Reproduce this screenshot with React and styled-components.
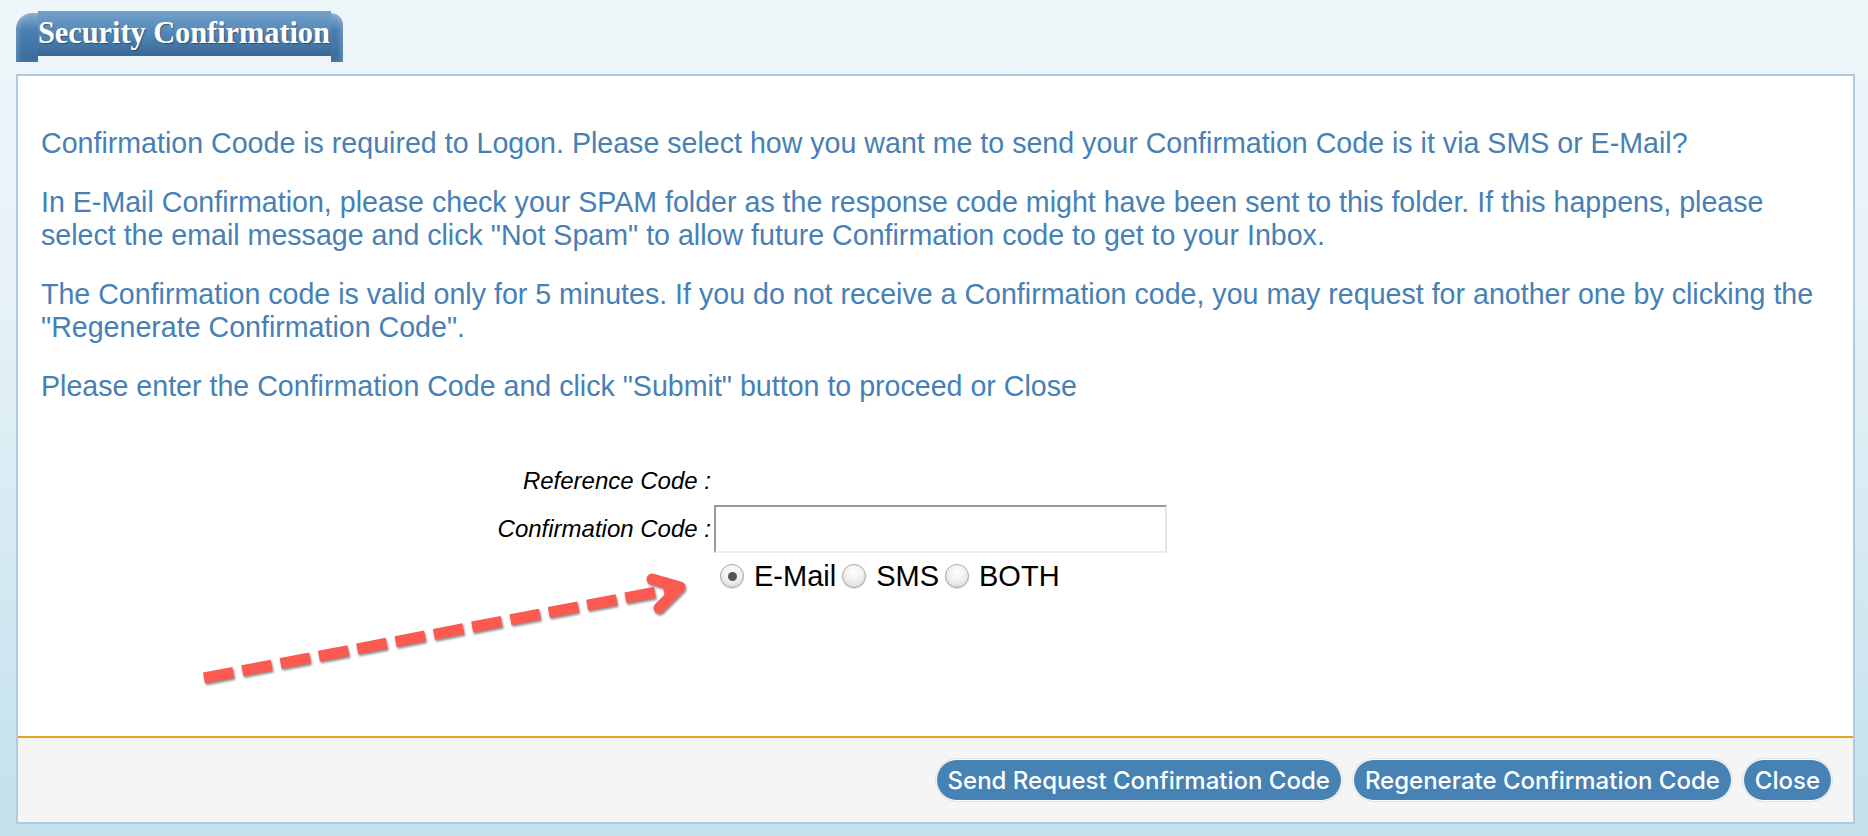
import React from "react";
import styled, { createGlobalStyle } from "styled-components";

const GlobalStyle = createGlobalStyle`
  html, body {
    margin: 0;
    padding: 0;
  }
  body {
    min-height: 836px;
    background: linear-gradient(to bottom, #eff6fa 0%, #e6f2f7 35%, #c2e1ec 100%);
    font-family: "Liberation Sans", Arial, sans-serif;
  }
`;

const Page = styled.div`
  padding: 11px 13px 12px 16px;
`;

const Tab = styled.div`
  display: inline-flex;
  align-items: flex-start;
  height: 51px;
  margin-bottom: 12px;
  vertical-align: top;
`;

const TabRow = styled.div`
  display: flex;
`;

const Ear = styled.div`
  flex-shrink: 0;
  align-self: stretch;
  width: ${(p) => (p.$side === "left" ? "22px" : "12px")};
  margin-top: 2px;
  background: linear-gradient(to bottom, #86abd0 0%, #4a7fb0 35%, #3a6c9c 100%);
  border-radius: ${(p) => (p.$side === "left" ? "16px 0 0 0" : "0 12px 0 0")};
  box-shadow: ${(p) =>
    p.$side === "left"
      ? "inset 3px 0 4px rgba(255,255,255,0.18)"
      : "inset -3px 0 4px rgba(255,255,255,0.18)"};
`;

const TabBar = styled.div`
  flex-shrink: 0;
  height: 45px;
  display: flex;
  align-items: center;
  padding-right: 1px;
  background: linear-gradient(to bottom, #73a1c9 0%, #5187b8 50%, #386894 100%);
  color: #fff;
  font-family: "Liberation Serif", "Times New Roman", serif;
  font-weight: bold;
  font-size: 30.5px;
  letter-spacing: -0.1px;
  text-shadow: 1px 1px 1px rgba(0, 0, 0, 0.35);
  white-space: nowrap;
`;

const Panel = styled.div`
  border: 2px solid #b3c9df;
  background: #fff;
`;

const Body = styled.div`
  position: relative;
  height: 660px;
  box-sizing: border-box;
  padding: 51px 23px 0 23px;
`;

const Para = styled.p`
  margin: 0 0 26px 0;
  font-size: 28.6px;
  line-height: 33px;
  color: #4680b5;
  white-space: nowrap;
`;

const Form = styled.div`
  display: grid;
  grid-template-columns: 670px auto;
  column-gap: 3px;
  grid-template-rows: 40px 48px 42px;
  row-gap: 4px;
  margin-top: 58px;
`;

const Label = styled.div`
  align-self: center;
  text-align: right;
  font-style: italic;
  font-size: 24px;
  color: #000;
  white-space: nowrap;
`;

const CodeInput = styled.input`
  box-sizing: border-box;
  width: 453px;
  height: 48px;
  border-width: 2px;
  border-style: solid;
  border-color: #9a9a9a #e4e4e4 #ececec #9a9a9a;
  background: #fff;
  outline: none;
  font-size: 24px;
  padding: 0 6px;
`;

const RadioRow = styled.div`
  display: flex;
  align-items: center;
  margin-top: -4px;
`;

const Option = styled.label`
  display: inline-flex;
  align-items: center;
  gap: 10px;
  margin-left: 6px;
  font-size: 29px;
  color: #000;
`;

const Radio = styled.input.attrs({ type: "radio" })`
  appearance: none;
  -webkit-appearance: none;
  box-sizing: border-box;
  margin: 0;
  width: 24px;
  height: 24px;
  border-radius: 50%;
  border: 1px solid #a4a4a4;
  background: radial-gradient(circle at 50% 35%, #ffffff 0%, #f1f1f1 45%, #d2d2d2 100%);
  box-shadow: inset 0 1px 1px rgba(255,255,255,0.9), 0 1px 1px rgba(0,0,0,0.12);
  display: grid;
  place-items: center;
  &:checked::after {
    content: "";
    width: 9px;
    height: 9px;
    border-radius: 50%;
    background: #555;
  }
`;

const ArrowSvg = styled.svg`
  position: absolute;
  left: 170px;
  top: 490px;
  width: 530px;
  height: 130px;
  overflow: visible;
  filter: drop-shadow(1px 2px 1px rgba(0, 0, 0, 0.45));
`;

const Footer = styled.div`
  height: 84px;
  border-top: 2px solid #dca522;
  background: #f5f5f5;
  display: flex;
  justify-content: flex-end;
  align-items: center;
  gap: 11px;
  padding-right: 21px;
`;

const Button = styled.button`
  height: 42px;
  box-sizing: border-box;
  padding: 0 11px;
  border: 1px solid #fff;
  box-shadow: 0 0 0 1px #e2e2e2;
  border-radius: 21px;
  background: #4682b4;
  color: #fff;
  font-family: Inter, "Liberation Sans", sans-serif;
  font-weight: 500;
  font-size: 24px;
  cursor: pointer;
  white-space: nowrap;
`;

export default function App() {
  return (
    <>
      <GlobalStyle />
      <Page>
        <TabRow>
          <Tab>
            <Ear $side="left" />
            <TabBar>Security Confirmation</TabBar>
            <Ear $side="right" />
          </Tab>
        </TabRow>
        <Panel>
          <Body>
            <Para>
              Confirmation Coode is required to Logon. Please select how you want me to send your
              Confirmation Code is it via SMS or E-Mail?
            </Para>
            <Para>
              In E-Mail Confirmation, please check your SPAM folder as the response code might have
              been sent to this folder. If this happens, please
              <br />
              select the email message and click "Not Spam" to allow future Confirmation code to get
              to your Inbox.
            </Para>
            <Para>
              The Confirmation code is valid only for 5 minutes. If you do not receive a Confirmation
              code, you may request for another one by clicking the
              <br />
              "Regenerate Confirmation Code".
            </Para>
            <Para>
              Please enter the Confirmation Code and click "Submit" button to proceed or Close
            </Para>
            <Form>
              <Label>Reference Code :</Label>
              <div />
              <Label>Confirmation Code :</Label>
              <CodeInput type="text" />
              <div />
              <RadioRow>
                <Option>
                  <Radio name="via" defaultChecked />
                  E-Mail
                </Option>
                <Option>
                  <Radio name="via" />
                  SMS
                </Option>
                <Option>
                  <Radio name="via" />
                  BOTH
                </Option>
              </RadioRow>
            </Form>
            <ArrowSvg viewBox="0 0 530 130">
              <g stroke="#fc5a50" strokeWidth="11" fill="none">
                <line x1="16" y1="112" x2="484" y2="23" strokeDasharray="30 9" strokeLinecap="butt" />
                <polyline points="464,13 492,21 471,42" strokeLinecap="round" strokeLinejoin="round" />
              </g>
            </ArrowSvg>
          </Body>
          <Footer>
            <Button>Send Request Confirmation Code</Button>
            <Button>Regenerate Confirmation Code</Button>
            <Button>Close</Button>
          </Footer>
        </Panel>
      </Page>
    </>
  );
}
